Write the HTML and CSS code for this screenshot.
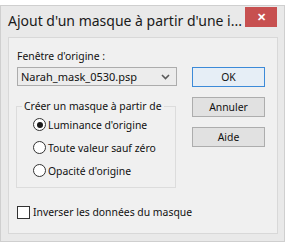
FILE: index.html
```html
<!DOCTYPE html>
<html lang="fr">
<head>
    <meta charset="UTF-8">
    <title>Ajout d'un masque à partir d'une image</title>
    <link rel="stylesheet" href="styles.css">
</head>
<body>

    <div class="window">
        <div class="titlebar">
            <span class="title">Ajout d'un masque à partir d'une i...</span>
            <span class="close">&#x2715;</span>
        </div>

        <div class="client">
            <div class="left">
                <label class="field-label">Fenêtre d'origine :</label>
                <div class="select">
                    <span>Narah_mask_0530.psp</span>
                    <svg class="chevron" width="9" height="6" viewBox="0 0 9 6"><path d="M1 1 L4.5 4.5 L8 1" fill="none" stroke="#5a5a5a" stroke-width="1.6"/></svg>
                </div>

                <fieldset class="group">
                    <legend>Créer un masque à partir de</legend>
                    <div class="radio-row"><span class="radio checked"></span>Luminance d'origine</div>
                    <div class="radio-row"><span class="radio"></span>Toute valeur sauf zéro</div>
                    <div class="radio-row"><span class="radio"></span>Opacité d'origine</div>
                </fieldset>

                <div class="check-row"><span class="checkbox"></span>Inverser les données du masque</div>
            </div>

            <div class="buttons">
                <div class="btn default">OK</div>
                <div class="btn">Annuler</div>
                <div class="btn">Aide</div>
            </div>
        </div>
    </div>

</body>
</html>
```

FILE: styles.css
```css
body {
    margin: 0;
    background-color: #fff;
    font-family: "Noto Sans", "Open Sans", sans-serif;
    color: #000;
}
.window {
    margin-top: 5px;
    width: 283px;
    height: 235px;
    background-color: #e9e9e9;
    border: 1px solid #cfcfcf;
    display: flex;
    flex-direction: column;
}
.titlebar {
    height: 31px;
    display: flex;
    align-items: flex-start;
}
.title {
    margin-left: 7px;
    margin-top: 6px;
    font-size: 14px;
    line-height: 18px;
    color: #1a1a1a;
    white-space: nowrap;
}
.close {
    margin-left: auto;
    margin-right: 7px;
    margin-top: 1px;
    width: 32px;
    height: 20px;
    background-color: #c75050;
    color: #fff;
    font-size: 11px;
    font-weight: bold;
    line-height: 20px;
    text-align: center;
}
.client {
    margin: 0 6px 7px 7px;
    flex: 1;
    background-color: #f0f0f0;
    border: 1px solid #d8d8d8;
    padding: 11px 0 0 7px;
    display: flex;
    font-size: 10.4px;
    line-height: 14px;
    color: #111;
}
.left {
    width: 161px;
}
.field-label {
    display: block;
    margin-left: 1px;
}
.select {
    margin-top: 4px;
    margin-left: 1px;
    height: 17px;
    border: 1px solid #acacac;
    background-color: #ececec;
    display: flex;
    align-items: center;
    padding-left: 3px;
    padding-right: 6px;
    font-size: 11px;
}
.chevron {
    margin-left: auto;
}
.group {
    margin: 13px 0 0 0;
    padding: 0 0 5px 0;
    width: 158px;
    border: 1px solid #dcdcdc;
    border-radius: 0;
}
.group legend {
    margin-left: 5px;
    padding: 0 2px;
    line-height: 14px;
}
.radio-row {
    height: 23px;
    display: flex;
    align-items: center;
    padding-left: 16px;
    white-space: nowrap;
}
.radio {
    flex-shrink: 0;
    width: 11px;
    height: 11px;
    border: 1px solid #333;
    border-radius: 50%;
    background-color: #fff;
    margin-right: 2px;
    display: flex;
    align-items: center;
    justify-content: center;
}
.radio.checked::after {
    content: "";
    width: 6px;
    height: 6px;
    border-radius: 50%;
    background-color: #1a1a1a;
}
.check-row {
    margin-top: 16px;
    height: 16px;
    display: flex;
    align-items: center;
    margin-left: 1px;
    white-space: nowrap;
}
.checkbox {
    flex-shrink: 0;
    width: 11px;
    height: 11px;
    border: 1px solid #333;
    background-color: #fff;
    margin-right: 3px;
}
.buttons {
    margin-left: 15px;
    margin-top: 18px;
    display: flex;
    flex-direction: column;
    gap: 10px;
}
.btn {
    width: 71px;
    height: 18px;
    border: 1px solid #adadad;
    background-color: #e1e1e1;
    text-align: center;
    line-height: 18px;
}
.btn.default {
    border-color: #3c8ad8;
    background-color: #e6eef6;
}
```
